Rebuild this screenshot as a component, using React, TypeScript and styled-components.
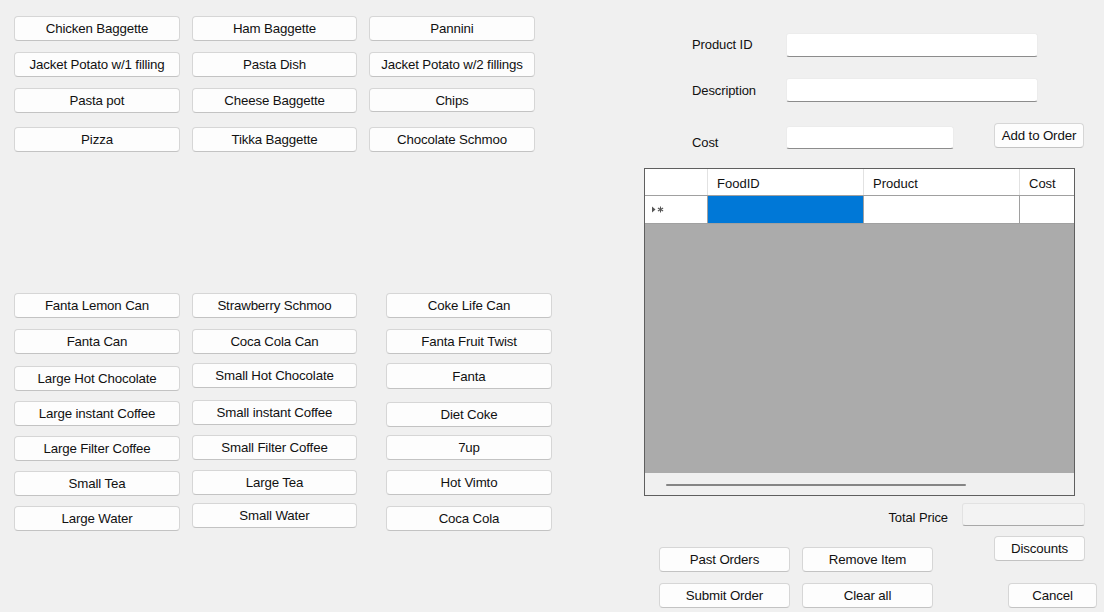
import React from 'react';
import styled, { createGlobalStyle } from 'styled-components';

const Global = createGlobalStyle`
  html, body { margin: 0; padding: 0; background: #f0f0f0; }
  body {
    width: 1104px; height: 612px; overflow: hidden;
    font-family: "Liberation Sans", Arial, sans-serif;
    font-size: 13px; color: #111111;
  }
  * { box-sizing: border-box; }
`;

const Window = styled.div`
  display: flex;
  width: 1104px;
  height: 612px;
`;

const LeftPanel = styled.div`
  width: 644px;
  padding: 16px 0 0 14px;
  display: flex;
  flex-direction: column;
`;

const ButtonRow = styled.div<{ $gap: number; $cols: string }>`
  display: grid;
  grid-template-columns: ${p => p.$cols};
  align-items: start;
  height: 25px;
  margin-top: ${p => p.$gap}px;
`;

const Button = styled.button<{ $w: number; $h?: number; $dy?: number }>`
  width: ${p => p.$w}px;
  height: ${p => p.$h ?? 25}px;
  margin: ${p => p.$dy ?? 0}px 0 0 0;
  padding: 0;
  display: flex;
  align-items: center;
  justify-content: center;
  background: #fdfdfd;
  border: 1px solid #d6d6d6;
  border-bottom-color: #c3c3c3;
  border-radius: 4px;
  font-family: inherit;
  font-size: 13.3px;
  color: #111111;
  white-space: nowrap;
  letter-spacing: -0.15px;
`;

const RightPanel = styled.div`
  flex: 1;
  padding-top: 33px;
  display: flex;
  flex-direction: column;
`;

const FormRow = styled.div<{ $gap: number }>`
  display: grid;
  grid-template-columns: 94px 252px;
  align-items: center;
  margin: ${p => p.$gap}px 0 0 48px;
  height: 24px;
`;

const CostRow = styled.div`
  display: grid;
  grid-template-columns: 94px 168px auto;
  align-items: start;
  margin: 21px 0 0 48px;
  height: 26px;
`;

const Label = styled.span<{ $dy?: number }>`
  line-height: 16px;
  margin-top: ${p => p.$dy ?? 0}px;
  white-space: nowrap;
  letter-spacing: -0.1px;
`;

const TextBox = styled.div<{ $w: number; $h?: number; $dy?: number; $readOnly?: boolean }>`
  width: ${p => p.$w}px;
  height: ${p => p.$h ?? 24}px;
  margin-top: ${p => p.$dy ?? 0}px;
  background: ${p => (p.$readOnly ? '#f3f3f3' : '#ffffff')};
  border: 1px solid ${p => (p.$readOnly ? '#e2e2e2' : '#ececec')};
  border-bottom-color: ${p => (p.$readOnly ? '#a8a8a8' : '#8c8c8c')};
  border-radius: 3px;
`;

const Grid = styled.div`
  margin-top: 19px;
  width: 431px;
  height: 328px;
  border: 1px solid #5f5f5f;
  display: flex;
  flex-direction: column;
  background: #ababab;
`;

const GridRow = styled.div<{ $h: number; $line: string }>`
  display: grid;
  grid-template-columns: 63px 156px 156px 1fr;
  height: ${p => p.$h}px;
  border-bottom: 1px solid ${p => p.$line};
  background: #ffffff;
`;

const HeaderCell = styled.div`
  padding: 2px 0 0 9px;
  display: flex;
  align-items: center;
  border-right: 1px solid #e2e2e2;
  background: #ffffff;
  &:last-child { border-right: none; }
`;

const Cell = styled.div<{ $selected?: boolean }>`
  display: flex;
  align-items: center;
  padding-left: 7px;
  border-right: 1px solid #a0a0a0;
  background: ${p => (p.$selected ? '#0078d7' : '#ffffff')};
  &:last-child { border-right: none; }
`;

const GrayArea = styled.div`
  flex: 1;
  background: #ababab;
`;

const ScrollBar = styled.div`
  height: 22px;
  background: #f0f0f0;
  padding: 11px 0 0 21px;
`;

const ScrollThumb = styled.div`
  width: 300px;
  height: 2px;
  background: #858585;
  border-radius: 1px;
`;

const TotalRow = styled.div`
  display: flex;
  justify-content: flex-end;
  align-items: flex-start;
  gap: 14px;
  margin-top: 7px;
  padding-right: 19px;
`;

const ActionArea = styled.div`
  display: flex;
  align-items: flex-start;
`;

const ActionGrid = styled.div`
  display: grid;
  grid-template-columns: 131px 131px;
  grid-auto-rows: 25px;
  column-gap: 12px;
  row-gap: 11px;
  margin: 21px 0 0 15px;
`;

const SideButtons = styled.div`
  display: flex;
  flex-direction: column;
  margin: 10px 0 0 61px;
`;

function NewRowIcon() {
  return (
    <svg width="13" height="7" viewBox="0 0 13 7">
      <path d="M0 0.5 L3.5 3.5 L0 6.5 Z" fill="#555" />
      <g stroke="#555" strokeWidth="1.1">
        <line x1="8.5" y1="0.5" x2="8.5" y2="6.5" />
        <line x1="5.9" y1="2" x2="11.1" y2="5" />
        <line x1="5.9" y1="5" x2="11.1" y2="2" />
      </g>
    </svg>
  );
}

type Item = [string, number?, number?];
type RowDef = { gap: number; items: Item[] };

const FOOD_COLS = '178px 177px 166px';
const DRINK_COLS = '178px 194px 166px';

const foodRows: RowDef[] = [
  { gap: 0, items: [['Chicken Baggette'], ['Ham Baggette'], ['Pannini']] },
  { gap: 11, items: [['Jacket Potato w/1 filling'], ['Pasta Dish'], ['Jacket Potato w/2 fillings']] },
  { gap: 11, items: [['Pasta pot'], ['Cheese Baggette'], ['Chips', 0, 24]] },
  { gap: 14, items: [['Pizza'], ['Tikka Baggette'], ['Chocolate Schmoo']] },
];

const drinkRows: RowDef[] = [
  { gap: 141, items: [['Fanta Lemon Can'], ['Strawberry Schmoo'], ['Coke Life Can']] },
  { gap: 11, items: [['Fanta Can'], ['Coca Cola Can'], ['Fanta Fruit Twist']] },
  { gap: 9, items: [['Large Hot Chocolate', 3], ['Small Hot Chocolate'], ['Fanta', 0, 26]] },
  { gap: 12, items: [['Large instant Coffee', 1], ['Small instant Coffee'], ['Diet Coke', 2]] },
  { gap: 10, items: [['Large Filter Coffee', 1], ['Small Filter Coffee'], ['7up']] },
  { gap: 10, items: [['Small Tea', 1], ['Large Tea'], ['Hot Vimto']] },
  { gap: 8, items: [['Large Water', 3], ['Small Water'], ['Coca Cola', 3]] },
];

const WIDTHS = [166, 165, 166];

function Rows({ rows, cols }: { rows: RowDef[]; cols: string }) {
  return (
    <>
      {rows.map((r, i) => (
        <ButtonRow key={i} $gap={r.gap} $cols={cols}>
          {r.items.map(([label, dy, h], j) => (
            <Button key={label} $w={WIDTHS[j]} $dy={dy} $h={h}>
              {label}
            </Button>
          ))}
        </ButtonRow>
      ))}
    </>
  );
}

export default function App() {
  return (
    <>
      <Global />
      <Window>
        <LeftPanel>
          <Rows rows={foodRows} cols={FOOD_COLS} />
          <Rows rows={drinkRows} cols={DRINK_COLS} />
        </LeftPanel>
        <RightPanel>
          <FormRow $gap={0}>
            <Label>Product ID</Label>
            <TextBox $w={252} />
          </FormRow>
          <FormRow $gap={21}>
            <Label $dy={2}>Description</Label>
            <TextBox $w={252} />
          </FormRow>
          <CostRow>
            <Label $dy={12}>Cost</Label>
            <TextBox $w={168} $h={23} $dy={3} />
            <Button $w={90} style={{ marginLeft: 40 }}>Add to Order</Button>
          </CostRow>
          <Grid>
            <GridRow $h={27} $line="#a0a0a0">
              <HeaderCell />
              <HeaderCell>FoodID</HeaderCell>
              <HeaderCell>Product</HeaderCell>
              <HeaderCell>Cost</HeaderCell>
            </GridRow>
            <GridRow $h={28} $line="#a0a0a0">
              <Cell><NewRowIcon /></Cell>
              <Cell $selected />
              <Cell />
              <Cell />
            </GridRow>
            <GrayArea />
            <ScrollBar>
              <ScrollThumb />
            </ScrollBar>
          </Grid>
          <TotalRow>
            <Label $dy={7}>Total Price</Label>
            <TextBox $w={123} $h={23} $readOnly />
          </TotalRow>
          <ActionArea>
            <ActionGrid>
              <Button $w={131}>Past Orders</Button>
              <Button $w={131}>Remove Item</Button>
              <Button $w={131}>Submit Order</Button>
              <Button $w={131}>Clear all</Button>
            </ActionGrid>
            <SideButtons>
              <Button $w={91}>Discounts</Button>
              <Button $w={89} style={{ margin: '22px 0 0 14px' }}>Cancel</Button>
            </SideButtons>
          </ActionArea>
        </RightPanel>
      </Window>
    </>
  );
}
